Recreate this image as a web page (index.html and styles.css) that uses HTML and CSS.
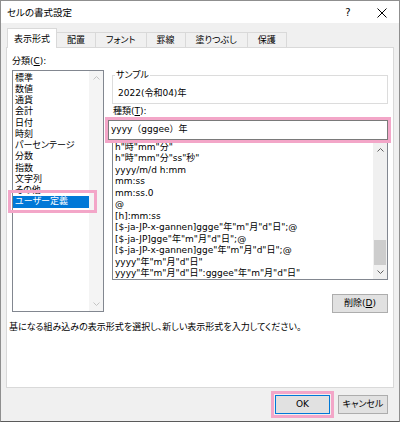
FILE: index.html
```html
<!DOCTYPE html>
<html lang="ja">
<head>
<meta charset="utf-8">
<title>セルの書式設定</title>
<link rel="stylesheet" href="styles.css">
</head>
<body>
<div class="window">
  <div class="titlebar">
    <span class="title">セルの書式設定</span>
    <span class="tbtn help">?</span>
    <span class="tbtn close"><svg width="10" height="10" viewBox="0 0 10 10"><path d="M0.5 0.5L9.5 9.5M9.5 0.5L0.5 9.5" stroke="#000" stroke-width="1"/></svg></span>
  </div>
  <div class="tabs">
    <div class="tab active">表示形式</div>
    <div class="tab">配置</div>
    <div class="tab">フォント</div>
    <div class="tab">罫線</div>
    <div class="tab">塗りつぶし</div>
    <div class="tab">保護</div>
  </div>
  <div class="panel">
    <div class="main">
      <div class="left">
        <div class="label">分類(<u>C</u>):</div>
        <div class="catlist">
          <div class="catitems">
            <div class="item">標準</div>
            <div class="item">数値</div>
            <div class="item">通貨</div>
            <div class="item">会計</div>
            <div class="item">日付</div>
            <div class="item">時刻</div>
            <div class="item">パーセンテージ</div>
            <div class="item">分数</div>
            <div class="item">指数</div>
            <div class="item">文字列</div>
            <div class="item">その他</div>
            <div class="item sel">ユーザー定義</div>
          </div>
          <div class="vscroll off">
            <span class="arrow"><svg width="7" height="4" viewBox="0 0 7 4"><path d="M0.5 3.5L3.5 0.5L6.5 3.5" fill="none" stroke="#c4c4c4"/></svg></span>
            <span class="arrow"><svg width="7" height="4" viewBox="0 0 7 4"><path d="M0.5 0.5L3.5 3.5L6.5 0.5" fill="none" stroke="#c4c4c4"/></svg></span>
          </div>
        </div>
        <div class="hl hl-cat"></div>
      </div>
      <div class="right">
        <fieldset class="sample">
          <legend>サンプル</legend>
          <div class="sample-val">2022(令和04)年</div>
        </fieldset>
        <div class="label label-type">種類(<u>T</u>):</div>
        <div class="input">yyyy（gggee）年<div class="hl hl-input"></div></div>
        <div class="typelist">
          <div class="typeitems">
            <div class="titem">h"時"mm"分"</div>
            <div class="titem">h"時"mm"分"ss"秒"</div>
            <div class="titem">yyyy/m/d h:mm</div>
            <div class="titem">mm:ss</div>
            <div class="titem">mm:ss.0</div>
            <div class="titem">@</div>
            <div class="titem">[h]:mm:ss</div>
            <div class="titem">[$-ja-JP-x-gannen]ggge"年"m"月"d"日";@</div>
            <div class="titem">[$-ja-JP]gge"年"m"月"d"日";@</div>
            <div class="titem">[$-ja-JP-x-gannen]gge"年"m"月"d"日";@</div>
            <div class="titem">yyyy"年"m"月"d"日"</div>
            <div class="titem">yyyy"年"m"月"d"日":gggee"年"m"月"d"日"</div>
          </div>
          <div class="vscroll">
            <span class="arrow"><svg width="7" height="4" viewBox="0 0 7 4"><path d="M0.5 3.5L3.5 0.5L6.5 3.5" fill="none" stroke="#606060"/></svg></span>
            <span class="track"><span class="thumb"></span></span>
            <span class="arrow"><svg width="7" height="4" viewBox="0 0 7 4"><path d="M0.5 0.5L3.5 3.5L6.5 0.5" fill="none" stroke="#606060"/></svg></span>
          </div>
        </div>
        <div class="btnrow"><button class="btn btn-del">削除(<u>D</u>)</button></div>
      </div>
    </div>
    <p class="desc">基になる組み込みの表示形式を選択し、新しい表示形式を入力してください。</p>
  </div>
  <div class="footer">
    <div class="okwrap"><button class="btn btn-ok">OK</button><div class="hl hl-ok"></div></div>
    <button class="btn btn-cancel">キャンセル</button>
  </div>
</div>
</body>
</html>
```
FILE: styles.css
```css
body {
  margin: 0;
}

.window {
  width: 400px;
  height: 422px;
  box-sizing: border-box;
  border: 1px solid #8f8f8f;
  border-bottom-color: #5a5a5a;
  background: #f0f0f0;
  font-family: "DejaVu Sans", "Noto Sans CJK JP", sans-serif;
  font-size: 9px;
  line-height: 11.5px;
  color: #000;
  font-feature-settings: "palt";
  display: flex;
  flex-direction: column;
}

/* title bar */
.titlebar {
  height: 22px;
  flex: none;
  background: #fff;
  display: flex;
  align-items: center;
  box-sizing: border-box;
  padding-top: 2px;
}
.title {
  flex: 1;
  padding-left: 6px;
  font-size: 9.5px;
}
.tbtn {
  width: 34px;
  height: 20px;
  display: flex;
  align-items: center;
  justify-content: center;
}
.help {
  font-size: 10px;
}

/* tabs */
.tabs {
  flex: none;
  height: 19px;
  margin-top: 5px;
  padding-left: 6px;
  display: flex;
  align-items: flex-start;
}
.tab {
  box-sizing: border-box;
  height: 15px;
  margin-top: 4px;
  padding: 2px 10px 0;
  border: 1px solid #d9d9d9;
  border-bottom: none;
  margin-left: -1px;
  background: #f0f0f0;
  white-space: nowrap;
}
.tab.active {
  position: relative;
  z-index: 2;
  height: 20px;
  margin-top: 0;
  margin-left: 0;
  padding: 5px 6px 0;
  background: #fff;
}

/* panel */
.panel {
  flex: none;
  height: 341px;
  margin: 0 5px;
  box-sizing: border-box;
  background: #fff;
  border: 1px solid #d9d9d9;
  padding: 8px 5px 0 5px;
}
.main {
  display: flex;
  gap: 4px;
}
.left {
  width: 92px;
  position: relative;
}
.label {
  line-height: 11.5px;
}
.catlist {
  margin-top: 2.5px;
  height: 242px;
  box-sizing: border-box;
  border: 1px solid #828790;
  display: flex;
}
.catitems {
  flex: 1;
  padding-top: 1.5px;
  line-height: 11.25px;
}
.item {
  padding-left: 2px;
  white-space: nowrap;
}
.item.sel {
  background: #0078d7;
  color: #fff;
}

.vscroll {
  width: 14px;
  flex: none;
  background: #f0f0f0;
  display: flex;
  flex-direction: column;
  justify-content: space-between;
}
.vscroll.off {
  background: #f4f4f4;
}
.arrow {
  height: 14px;
  display: flex;
  align-items: center;
  justify-content: center;
  flex: none;
}
.track {
  flex: 1;
  display: flex;
  flex-direction: column;
}
.thumb {
  margin: 83px 1px 0;
  height: 25px;
  background: #cdcdcd;
}

.hl {
  position: absolute;
  border: 3px solid #f3a6c8;
  pointer-events: none;
}
.hl-cat {
  left: -4px;
  top: 134px;
  width: 83px;
  height: 17px;
}

/* right column */
.right {
  width: 280px;
}
.sample {
  margin: 14px 0 0 4px;
  padding: 0 0 4px 2px;
  border: 1px solid #dcdcdc;
  min-width: 0;
}
.sample legend {
  padding: 0 1px;
  line-height: 11.5px;
}
.sample-val {
  margin: 6px 0 0 3px;
}
.label-type {
  margin-top: 2px;
  padding-left: 5px;
}
.input {
  position: relative;
  margin-top: 2.5px;
  height: 20px;
  box-sizing: border-box;
  border: 1px solid #7a7a7a;
  background: #fff;
  padding-left: 2px;
  display: flex;
  align-items: center;
  font-feature-settings: normal;
}
.hl-input {
  left: -4px;
  top: -4px;
  right: -4px;
  bottom: -4px;
}
.typelist {
  margin: 2px 0 0 4px;
  height: 138px;
  box-sizing: border-box;
  border: 1px solid #828790;
  display: flex;
  overflow: hidden;
}
.typeitems {
  flex: 1;
  padding-left: 2px;
  margin-top: -1.5px;
  white-space: nowrap;
  overflow: hidden;
}
.btnrow {
  display: flex;
  justify-content: flex-end;
  margin-top: 14px;
}

.btn {
  font: inherit;
  font-feature-settings: "palt";
  color: #000;
  background: #e1e1e1;
  border: 1px solid #adadad;
  padding: 0;
  height: 19px;
  box-sizing: border-box;
  margin: 0;
}
.btn-del {
  width: 56px;
}

.desc {
  margin: 9px 0 0 -3px;
}

/* footer */
.footer {
  flex: 1;
  display: flex;
  justify-content: flex-end;
  align-items: flex-start;
  padding: 7px 11px 0 0;
  gap: 8px;
}
.okwrap {
  position: relative;
}
.btn-ok {
  width: 55px;
  border-color: #0078d7;
}
.hl-ok {
  left: -4px;
  top: -4px;
  right: -4px;
  bottom: -4px;
}
.btn-cancel {
  width: 50px;
}
```
